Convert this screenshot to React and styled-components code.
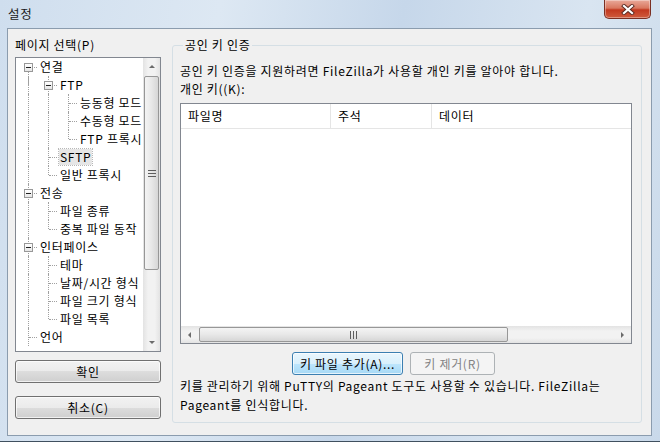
import React from "react";
import styled, { createGlobalStyle, css } from "styled-components";

const GlobalStyle = createGlobalStyle`
  html, body {
    margin: 0;
    padding: 0;
    background: #3b4a5a;
  }
  body {
    font-family: "Noto Sans CJK KR", "Noto Sans", sans-serif;
    font-size: 12px;
    letter-spacing: 0.7px;
    color: #000;
  }
`;

const tree = [
  { label: "연결", level: 0, open: true, lines: [], last: false },
  { label: "FTP", level: 1, open: true, lines: [true], last: false },
  { label: "능동형 모드", level: 2, lines: [true, true], last: false },
  { label: "수동형 모드", level: 2, lines: [true, true], last: false },
  { label: "FTP 프록시", level: 2, lines: [true, true], last: true },
  { label: "SFTP", level: 1, lines: [true], last: false, selected: true },
  { label: "일반 프록시", level: 1, lines: [true], last: true },
  { label: "전송", level: 0, open: true, lines: [], last: false },
  { label: "파일 종류", level: 1, lines: [true], last: false },
  { label: "중복 파일 동작", level: 1, lines: [true], last: true },
  { label: "인터페이스", level: 0, open: true, lines: [], last: false },
  { label: "테마", level: 1, lines: [true], last: false },
  { label: "날짜/시간 형식", level: 1, lines: [true], last: false },
  { label: "파일 크기 형식", level: 1, lines: [true], last: false },
  { label: "파일 목록", level: 1, lines: [true], last: true },
  { label: "언어", level: 0, lines: [], last: false },
];

const Window = styled.div`
  width: 660px;
  height: 442px;
  display: flex;
  flex-direction: column;
  background: linear-gradient(100deg, #cfdeee 0%, #dde8f3 30%, #c6d7ea 55%, #d9e5f1 80%, #c9d9ea 100%);
  overflow: hidden;
  box-sizing: border-box;
  border-bottom: 1px solid #40505f;
`;

const TitleBar = styled.div`
  height: 28px;
  display: flex;
  align-items: flex-start;
  justify-content: space-between;
  padding-left: 8px;
  padding-right: 9px;
  box-sizing: border-box;
`;

const Title = styled.div`
  font-size: 12.5px;
  line-height: 28px;
  color: #1a1a1a;
`;

const CloseButton = styled.div`
  width: 47px;
  height: 19px;
  box-sizing: border-box;
  border: 1px solid #7a2f23;
  border-top: none;
  border-radius: 0 0 5px 5px;
  background: linear-gradient(#e9a99a 0%, #d9775f 45%, #c2381f 55%, #cf5b3d 100%);
  box-shadow: inset 0 0 0 1px rgba(255, 255, 255, 0.35);
  display: flex;
  align-items: center;
  justify-content: center;
`;

const Frame = styled.div`
  flex: 1;
  display: flex;
  padding: 0 8px 5px 7px;
  min-height: 0;
`;

const Client = styled.div`
  flex: 1;
  display: flex;
  gap: 11px;
  background: #f0f0f0;
  border: 1px solid #8b9cae;
  padding: 8px 8px 0 7px;
`;

const LeftColumn = styled.div`
  width: 146px;
  display: flex;
  flex-direction: column;
`;

const Label = styled.div`
  line-height: 16px;
  height: 16px;
  white-space: nowrap;
`;

const TreeBox = styled.div`
  margin-top: 4px;
  height: 295px;
  box-sizing: border-box;
  border: 1px solid #828790;
  background: #fff;
  display: flex;
  overflow: hidden;
`;

const TreeList = styled.div`
  flex: 1;
  padding-left: 2px;
  overflow: hidden;
`;

const TreeRow = styled.div`
  height: 18px;
  display: flex;
  align-items: stretch;
`;

const Guide = styled.div`
  width: 20px;
  flex: none;
  position: relative;
  ${({ line }) =>
    line &&
    css`
      &::before {
        content: "";
        position: absolute;
        left: 10px;
        top: 0;
        bottom: 0;
        border-left: 1px dotted #a0a0a0;
      }
    `}
`;

const Connector = styled.div`
  width: 20px;
  flex: none;
  position: relative;
  &::before {
    content: "";
    position: absolute;
    left: 10px;
    top: ${({ first }) => (first ? "9px" : "0")};
    height: ${({ last }) => (last ? "9px" : "18px")};
    border-left: 1px dotted #a0a0a0;
  }
  &::after {
    content: "";
    position: absolute;
    left: 11px;
    top: 9px;
    width: 8px;
    border-top: 1px dotted #a0a0a0;
  }
`;

const Expander = styled.div`
  position: absolute;
  left: 6px;
  top: 5px;
  width: 9px;
  height: 9px;
  box-sizing: border-box;
  border: 1px solid #989898;
  background: linear-gradient(#fff, #e6e6e6);
  z-index: 1;
  &::after {
    content: "";
    position: absolute;
    left: 1px;
    top: 3px;
    width: 5px;
    border-top: 1px solid #202020;
  }
`;

const TreeText = styled.div`
  margin-left: 1px;
  padding: 0 1px;
  line-height: 16px;
  height: 16px;
  margin-top: 1px;
  white-space: nowrap;
  ${({ selected }) =>
    selected &&
    css`
      background: #e6e6e6;
      outline: 1px dotted #b8b8b8;
    `}
`;

const VScroll = styled.div`
  width: 17px;
  flex: none;
  display: flex;
  flex-direction: column;
  background: linear-gradient(90deg, #e3e3e3, #f2f2f2 30%, #f2f2f2 70%, #e3e3e3);
`;

const ArrowBox = styled.div`
  width: 17px;
  height: 17px;
  flex: none;
  display: flex;
  align-items: center;
  justify-content: center;
`;

const VThumb = styled.div`
  margin: 1px 1px 0 1px;
  height: 194px;
  box-sizing: border-box;
  border: 1px solid #979797;
  border-radius: 2px;
  background: linear-gradient(90deg, #f4f4f4, #e8e8e8 50%, #d6d6d6);
  display: flex;
  align-items: center;
  justify-content: center;
`;

const Spacer = styled.div`
  flex: 1;
`;

const Button = styled.div`
  height: 23px;
  box-sizing: border-box;
  border: 1px solid ${({ focused, disabled }) => (disabled ? "#adb2b5" : focused ? "#3c7fb1" : "#707070")};
  border-radius: 3px;
  background: ${({ disabled, focused }) =>
    disabled
      ? "#f4f4f4"
      : focused
      ? "linear-gradient(#eaf6fd 0%, #d9f0fc 50%, #bee6fd 50%, #a7d9f5 100%)"
      : "linear-gradient(#f2f2f2 0%, #ebebeb 50%, #dddddd 50%, #cfcfcf 100%)"};
  box-shadow: inset 0 0 0 1px ${({ disabled }) => (disabled ? "transparent" : "rgba(255,255,255,0.7)")};
  color: ${({ disabled }) => (disabled ? "#838383" : "#000")};
  display: flex;
  align-items: center;
  justify-content: center;
  line-height: 16px;
  white-space: nowrap;
  width: ${({ width }) => width}px;
  flex: none;
`;

const LeftButton = styled(Button)`
  margin-top: ${({ gap }) => gap}px;
`;

const Group = styled.fieldset`
  margin: 0 0 12px 0;
  width: 470px;
  box-sizing: border-box;
  border: 1px solid #d5dfe5;
  border-radius: 3px;
  padding: 0 9px 0 7px;
  display: flex;
  flex-direction: column;
`;

const Legend = styled.legend`
  padding: 0 2px;
  margin-left: 3px;
  line-height: 16px;
`;

const Text = styled.div`
  line-height: ${({ lh }) => lh || 18}px;
  white-space: nowrap;
  margin-top: ${({ mt }) => mt || 0}px;
`;

const ListView = styled.div`
  margin-top: 5px;
  height: 241px;
  box-sizing: border-box;
  border: 1px solid #828790;
  background: #fff;
  display: flex;
  flex-direction: column;
`;

const Header = styled.div`
  height: 24px;
  display: flex;
  border-bottom: 1px solid #e5e5e5;
`;

const HeaderCell = styled.div`
  width: ${({ width }) => width}px;
  flex: ${({ grow }) => (grow ? 1 : "none")};
  box-sizing: border-box;
  padding-left: 7px;
  line-height: 23px;
  border-right: ${({ grow }) => (grow ? "none" : "1px solid #e5e5e5")};
`;

const ListBody = styled.div`
  flex: 1;
`;

const HScroll = styled.div`
  height: 17px;
  display: flex;
  align-items: center;
  background: linear-gradient(#e3e3e3, #f2f2f2 30%, #f2f2f2 70%, #e3e3e3);
`;

const HThumb = styled.div`
  width: 309px;
  height: 15px;
  margin-left: 1px;
  box-sizing: border-box;
  border: 1px solid #979797;
  border-radius: 2px;
  background: linear-gradient(#f4f4f4, #e8e8e8 50%, #d6d6d6);
  display: flex;
  align-items: center;
  justify-content: center;
`;

const ButtonRow = styled.div`
  margin-top: 8px;
  display: flex;
  gap: 7px;
  padding-left: 112px;
`;

const Arrow = ({ dir }) => {
  const pts = {
    up: "1,5 4,2 7,5",
    down: "1,2 4,5 7,2",
    left: "5,1 2,4 5,7",
    right: "2,1 5,4 2,7",
  }[dir];
  return (
    <svg width="8" height="8" viewBox="0 0 8 8">
      <polygon points={pts} fill="#6b6b6b" />
    </svg>
  );
};

const Grip = ({ vertical }) => (
  <svg width={vertical ? 8 : 7} height={vertical ? 7 : 8} viewBox={vertical ? "0 0 8 7" : "0 0 7 8"}>
    {[0, 3, 6].map((p) =>
      vertical ? (
        <rect key={p} x="0" y={p} width="8" height="1" fill="#5e5e5e" />
      ) : (
        <rect key={p} x={p} y="0" width="1" height="8" fill="#5e5e5e" />
      )
    )}
  </svg>
);

const TreeItem = ({ item, index }) => (
  <TreeRow>
    {item.lines.map((l, i) => {
      const parentLast =
        i === item.level - 1 ? false : tree.slice(0, index).reverse().find((t) => t.level === i)?.last;
      return <Guide key={i} line={i < item.level && !parentLast} />;
    })}
    <Connector first={index === 0} last={item.last}>
      {item.open && <Expander />}
    </Connector>
    <TreeText selected={item.selected}>{item.label}</TreeText>
  </TreeRow>
);

const App = () => {
  return (
    <>
      <GlobalStyle />
      <Window>
        <TitleBar>
          <Title>설정</Title>
          <CloseButton>
            <svg width="14" height="11" viewBox="0 0 14 11">
              <path
                d="M3 2 L11 9 M11 2 L3 9"
                stroke="#5a2a22"
                strokeWidth="4"
                strokeLinecap="square"
              />
              <path d="M3 2 L11 9 M11 2 L3 9" stroke="#fff" strokeWidth="2.2" strokeLinecap="square" />
            </svg>
          </CloseButton>
        </TitleBar>
        <Frame>
          <Client>
            <LeftColumn>
              <Label>페이지 선택(P)</Label>
              <TreeBox>
                <TreeList>
                  {tree.map((item, i) => (
                    <TreeItem key={i} item={item} index={i} />
                  ))}
                </TreeList>
                <VScroll>
                  <ArrowBox>
                    <Arrow dir="up" />
                  </ArrowBox>
                  <VThumb>
                    <Grip vertical />
                  </VThumb>
                  <Spacer />
                  <ArrowBox>
                    <Arrow dir="down" />
                  </ArrowBox>
                </VScroll>
              </TreeBox>
              <LeftButton width={146} gap={8}>
                확인
              </LeftButton>
              <LeftButton width={146} gap={13}>
                취소(C)
              </LeftButton>
            </LeftColumn>
            <Group>
              <Legend>공인 키 인증</Legend>
              <Text mt={9}>공인 키 인증을 지원하려면 FileZilla가 사용할 개인 키를 알아야 합니다.</Text>
              <Text>개인 키((K):</Text>
              <ListView>
                <Header>
                  <HeaderCell width={150}>파일명</HeaderCell>
                  <HeaderCell width={101}>주석</HeaderCell>
                  <HeaderCell grow>데이터</HeaderCell>
                </Header>
                <ListBody />
                <HScroll>
                  <ArrowBox>
                    <Arrow dir="left" />
                  </ArrowBox>
                  <HThumb>
                    <Grip />
                  </HThumb>
                  <Spacer />
                  <ArrowBox>
                    <Arrow dir="right" />
                  </ArrowBox>
                </HScroll>
              </ListView>
              <ButtonRow>
                <Button width={111} focused>
                  키 파일 추가(A)...
                </Button>
                <Button width={85} disabled>
                  키 제거(R)
                </Button>
              </ButtonRow>
              <Text lh={19} mt={1}>
                키를 관리하기 위해 PuTTY의 Pageant 도구도 사용할 수 있습니다. FileZilla는
              </Text>
              <Text lh={19}>Pageant를 인식합니다.</Text>
            </Group>
          </Client>
        </Frame>
      </Window>
    </>
  );
};

export default App;
